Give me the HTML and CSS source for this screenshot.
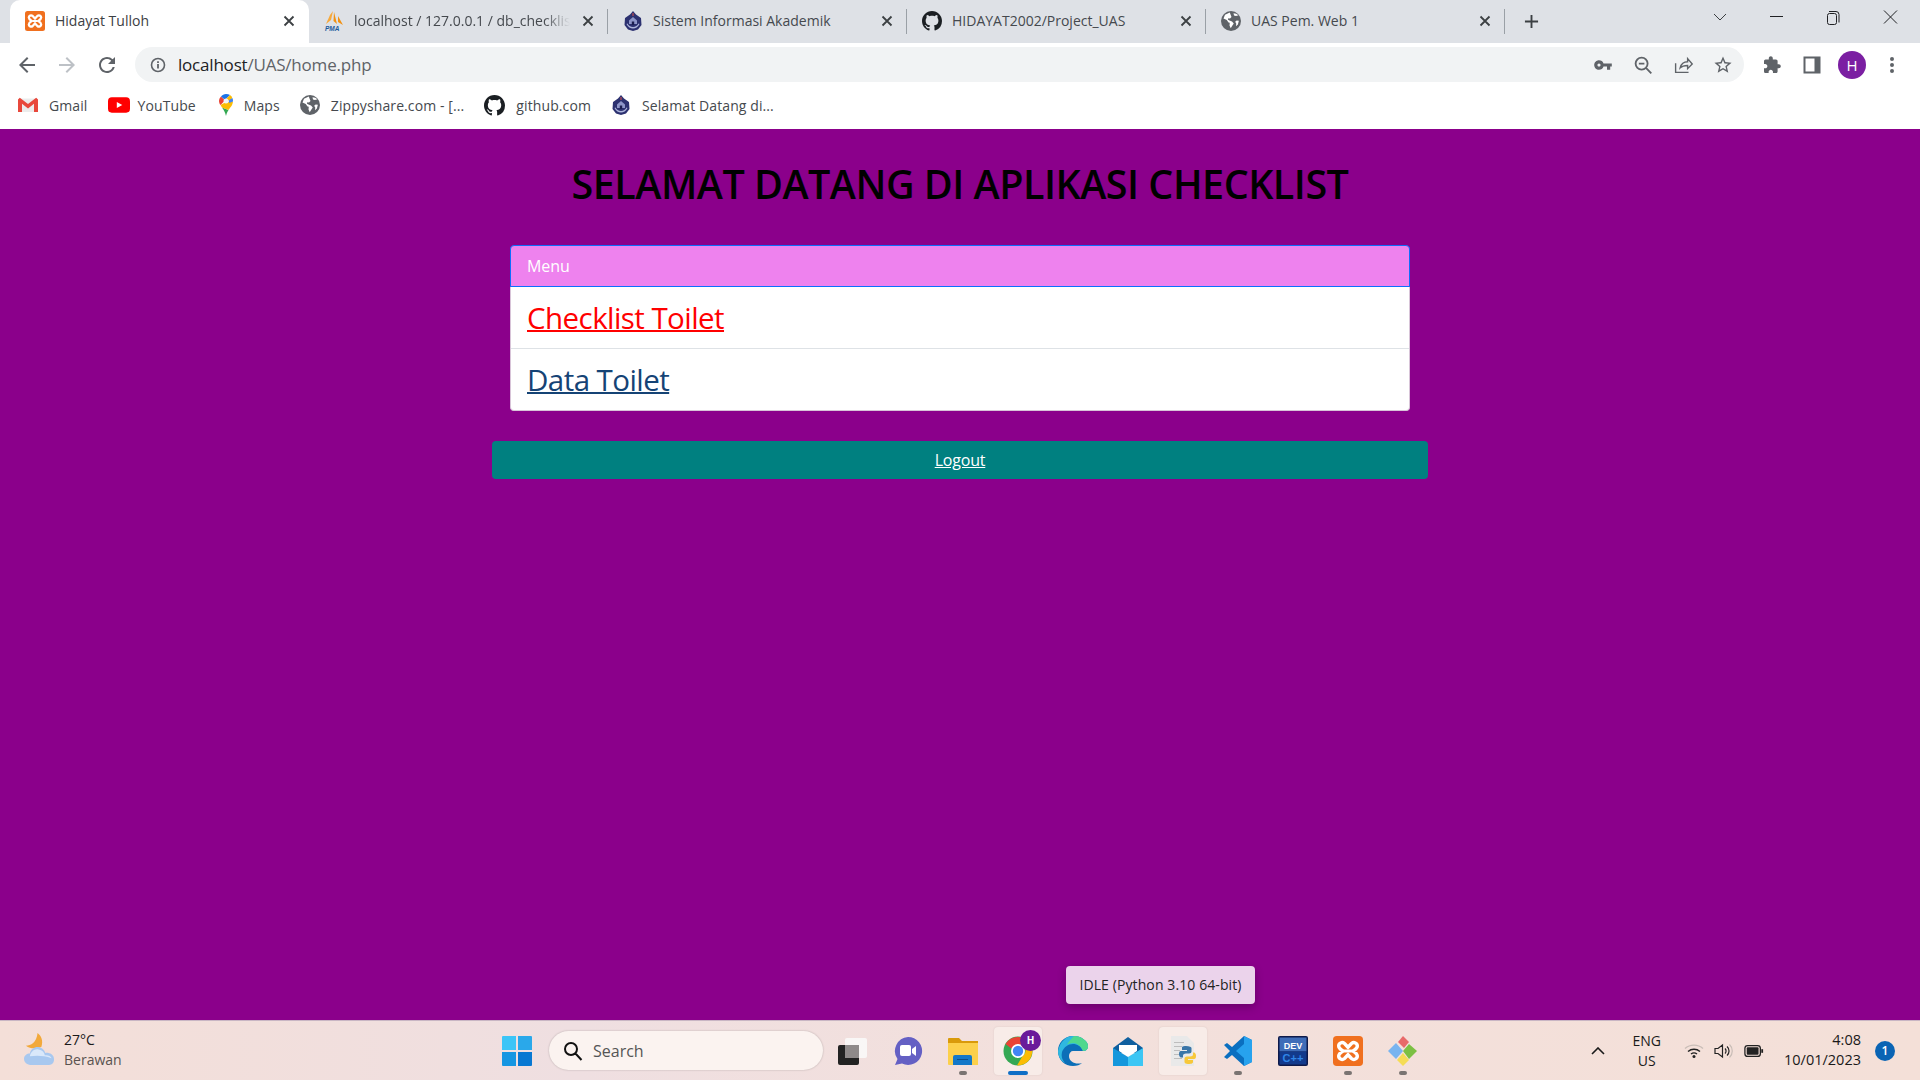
FILE: index.html
```html
<!DOCTYPE html>
<html lang="id">
<head>
<meta charset="utf-8">
<title>Hidayat Tulloh</title>
<link rel="stylesheet" href="styles.css">
</head>
<body>
<svg class="sprite" aria-hidden="true">
  <symbol id="github" viewBox="0 0 16 16"><path fill="#1b1f23" d="M8 0C3.58 0 0 3.58 0 8c0 3.54 2.29 6.53 5.47 7.59.4.07.55-.17.55-.38 0-.19-.01-.82-.01-1.49-2.01.37-2.53-.49-2.69-.94-.09-.23-.48-.94-.82-1.13-.28-.15-.68-.52-.01-.53.63-.01 1.08.58 1.23.82.72 1.21 1.87.87 2.33.66.07-.52.28-.87.51-1.07-1.78-.2-3.64-.89-3.64-3.95 0-.87.31-1.59.82-2.15-.08-.2-.36-1.02.08-2.12 0 0 .67-.21 2.2.82.64-.18 1.32-.27 2-.27.68 0 1.36.09 2 .27 1.53-1.04 2.2-.82 2.2-.82.44 1.1.16 1.92.08 2.12.51.56.82 1.27.82 2.15 0 3.07-1.87 3.75-3.65 3.95.29.25.54.73.54 1.48 0 1.07-.01 1.93-.01 2.2 0 .21.15.46.55.38A8.013 8.013 0 0016 8c0-4.42-3.58-8-8-8z"/></symbol>
  <symbol id="globe" viewBox="0 0 16 16"><circle cx="8" cy="8" r="8" fill="#5f6368"/><path fill="#fff" d="M7 1.200 3.200 3 2 6l2.600 1.200 1.400 2 1 .2-.2 2.200 1 2.200L9 11.800l1.200-1.800-1.400-1.600-2-.8-1.200-.6.2-1.200 1.400.2 1.200-1.200zM10 1.800l.4 1.700 1.600.5 2-.6A7 7 0 0 0 10 1.800zM12.500 7.500l-1.200 1 .9 1.500-.2 2.200 1.500-1.500.8-3z"/></symbol>
  <symbol id="akad" viewBox="0 0 20 20"><path fill="#2c3170" d="M10 0 13 3.500 18 7 18.500 14 15 18.500 10 20 5 18.500 1.500 14 2 7 7 3.500z"/><path fill="#aeb6dc" d="M3.500 13c1.500 3 4 4.500 6.500 4.500s5-1.500 6.500-4.500l-1-.5c-1 2-3 3.500-5.500 3.500s-4.500-1.500-5.500-3.500z"/><path fill="#8d95c8" d="M6 9.500 10 6l4 3.500V13H6z"/><path fill="#1b1e4f" d="M8.800 10.500h2.400V14H8.800z"/><path fill="#d8504a" d="M9.500 2h1v3h-1z"/></symbol>
  <symbol id="xampp" viewBox="0 0 20 20"><rect width="20" height="20" rx="2.500" fill="#f0701f"/><path fill="none" stroke="#fff" stroke-width="2.300" d="M10 7.500 7.700 5C6 3.700 3.800 4.800 3.800 6.600c0 1.500 1.300 2.400 2.900 3.400-1.600 1-2.900 1.900-2.900 3.400 0 1.800 2.200 2.900 3.900 1.600L10 12.500l2.300 2.500c1.700 1.300 3.900.2 3.900-1.600 0-1.500-1.300-2.400-2.900-3.400 1.600-1 2.900-1.900 2.900-3.400 0-1.800-2.200-2.900-3.900-1.600z"/><path stroke="#fff" stroke-width="2" d="M7.500 10h5"/></symbol>
  <symbol id="close" viewBox="0 0 12 12"><path fill="none" stroke="#3c4043" stroke-width="1.800" d="M1.500 1.500 10.500 10.500M10.500 1.500 1.500 10.500"/></symbol>
</svg>

<header class="chrome">
  <div class="tabstrip">
    <div class="tab active">
      <svg class="favicon"><use href="#xampp"/></svg><span class="tab-title">Hidayat Tulloh</span>
      <svg class="tab-x"><use href="#close"/></svg>
    </div>
    <div class="tab">
      <svg class="favicon" viewBox="0 0 20 20"><path fill="#f7a93c" d="M9 0 7 9 2 13 6 4z"/><path fill="#f29111" d="M10 1l3 12-3.500-3zM14 5l5 9-5-3z"/><text x="1" y="19.500" class="pma">PMA</text></svg><span class="tab-title fade">localhost / 127.0.0.1 / db_checklis</span>
      <svg class="tab-x"><use href="#close"/></svg><i class="sep"></i>
    </div>
    <div class="tab">
      <svg class="favicon"><use href="#akad"/></svg><span class="tab-title">Sistem Informasi Akademik</span>
      <svg class="tab-x"><use href="#close"/></svg><i class="sep"></i>
    </div>
    <div class="tab">
      <svg class="favicon"><use href="#github"/></svg><span class="tab-title">HIDAYAT2002/Project_UAS</span>
      <svg class="tab-x"><use href="#close"/></svg><i class="sep"></i>
    </div>
    <div class="tab">
      <svg class="favicon"><use href="#globe"/></svg><span class="tab-title">UAS Pem. Web 1</span>
      <svg class="tab-x"><use href="#close"/></svg><i class="sep"></i>
    </div>
    <svg class="newtab" viewBox="0 0 16 16"><path fill="none" stroke="#3c4043" stroke-width="2" d="M8 1v14M1 8h14"/></svg>
    <div class="winctl">
      <svg class="ctl" viewBox="0 0 57 24"><path fill="none" stroke="#3c4043" d="M23 8l6 6 6-6"/></svg>
      <svg class="ctl" viewBox="0 0 57 24"><path stroke="#202124" d="M22 10.500h13"/></svg>
      <svg class="ctl" viewBox="0 0 57 24"><path fill="none" stroke="#202124" d="M24 5.500h7a3 3 0 0 1 3 3v8M22.500 9.500a2 2 0 0 1 2-2h5a2 2 0 0 1 2 2v7a2 2 0 0 1-2 2h-5a2 2 0 0 1-2-2z"/></svg>
      <svg class="ctl" viewBox="0 0 57 24"><path fill="none" stroke="#202124" d="M22 4.500l13 13M35 4.500l-13 13"/></svg>
    </div>
  </div>

  <div class="toolbar">
    <svg class="tool" viewBox="0 0 24 24"><path fill="#5f6368" d="M20 11H7.830l5.590-5.590L12 4l-8 8 8 8 1.410-1.410L7.830 13H20z"/></svg>
    <svg class="tool" viewBox="0 0 24 24"><path fill="#bdc1c6" d="M4 11h12.170l-5.590-5.590L12 4l8 8-8 8-1.410-1.410L16.170 13H4z"/></svg>
    <svg class="tool" viewBox="0 0 24 24"><path fill="#5f6368" d="M17.650 6.350A7.958 7.958 0 0012 4c-4.420 0-7.990 3.580-7.990 8s3.570 8 7.990 8c3.730 0 6.840-2.550 7.730-6h-2.080A5.990 5.990 0 0112 18c-3.310 0-6-2.690-6-6s2.690-6 6-6c1.660 0 3.140.69 4.220 1.780L13 11h7V4z"/></svg>
    <div class="omnibox">
      <svg class="info" viewBox="0 0 16 16"><circle cx="8" cy="8" r="6.500" fill="none" stroke="#5f6368" stroke-width="1.600"/><path stroke="#5f6368" stroke-width="1.800" d="M8 7v4.500M8 4.200v1.800"/></svg>
      <span class="url"><b>localhost</b>/UAS/home.php</span>
      <div class="omni-actions">
        <svg class="tool" viewBox="-3 -3 30 30"><path fill="#5f6368" d="M12.650 10A5.990 5.990 0 007 6c-3.310 0-6 2.690-6 6s2.690 6 6 6a5.990 5.990 0 005.650-4H17v4h4v-4h2v-4H12.650zM7 14c-1.100 0-2-.9-2-2s.9-2 2-2 2 .9 2 2-.9 2-2 2z"/></svg>
        <svg class="tool" viewBox="-1 -1 26 26"><path fill="none" stroke="#5f6368" stroke-width="2" d="M10.500 4a6.500 6.500 0 1 1 0 13 6.500 6.500 0 0 1 0-13zM15.200 15.200 21 21M7.500 10.500h6"/></svg>
        <svg class="tool" viewBox="-1 -1 26 26"><path fill="none" stroke="#5f6368" stroke-width="1.500" d="M4 10v10h14M9 15c1-4 4-6.500 8-6.500V5l5 6-5 5v-3.500c-3 0-6 .5-8 2.500z"/></svg>
        <svg class="tool" viewBox="-2 -2 28 28"><path fill="#5f6368" d="M22 9.240l-7.190-.62L12 2 9.190 8.630 2 9.240l5.460 4.730L5.820 21 12 17.270 18.180 21l-1.630-7.030L22 9.240zM12 15.400l-3.760 2.270 1-4.280-3.320-2.880 4.380-.38L12 6.100l1.710 4.040 4.380.38-3.320 2.880 1 4.280L12 15.400z"/></svg>
      </div>
    </div>
    <div class="tool-right">
      <svg class="tool" viewBox="-3 -3 30 30"><path fill="#5f6368" d="M20.500 11H19V7c0-1.100-.9-2-2-2h-4V3.500C13 2.120 11.880 1 10.500 1S8 2.120 8 3.500V5H4c-1.100 0-1.990.9-1.990 2v3.800H3.500c1.490 0 2.700 1.210 2.700 2.700s-1.210 2.700-2.700 2.700H2V20c0 1.100.9 2 2 2h3.800v-1.500c0-1.490 1.210-2.700 2.700-2.700 1.490 0 2.700 1.210 2.700 2.700V22H17c1.100 0 2-.9 2-2v-4h1.500c1.380 0 2.500-1.120 2.500-2.500S21.880 11 20.500 11z"/></svg>
      <svg class="tool" viewBox="0 0 24 24"><path fill="#5f6368" fill-rule="evenodd" d="M3.500 3.500h17v17h-17zM5.500 5.500v13h9v-13z"/></svg>
      <span class="avatar">H</span>
      <svg class="tool" viewBox="0 0 24 24"><path fill="#5f6368" d="M12 4a2 2 0 1 1 0 4 2 2 0 0 1 0-4zM12 10a2 2 0 1 1 0 4 2 2 0 0 1 0-4zM12 16a2 2 0 1 1 0 4 2 2 0 0 1 0-4z"/></svg>
    </div>
  </div>

  <nav class="bookmarks">
    <a class="bm"><svg class="bm-ico" viewBox="0 0 20 16"><path fill="#ececec" d="M1 1.500h18V15H1z"/><path fill="#e8483c" d="M0 2.500 1.800.8 10 7l8.200-6.200L20 2.500V15h-4V6.800L10 11.500 4 6.800V15H0z"/></svg>Gmail</a>
    <a class="bm"><svg class="bm-ico wide" viewBox="0 0 20 14"><rect width="20" height="14" rx="3.500" fill="#f00"/><path fill="#fff" d="M8 4.200 13 7l-5 2.800z"/></svg>YouTube</a>
    <a class="bm"><svg class="bm-ico maps" viewBox="0 0 14 22"><path fill="#34a853" d="M3 13.500c2 3 3.200 5 4 8.500.7-3 1.500-4.300 2.500-6z"/><path fill="#fbbc04" d="M1.500 11c.7 1 1.500 2.500 1.500 2.500l6.500 2.500c1.200-2 4-4 4.500-8.500L7 8z"/><path fill="#4285f4" d="M13.300 4 9.500 5 10 9l4-1.500c.1-1.500 0-2.500-.7-3.500z"/><path fill="#ea4335" d="M2 2.500C.5 4 0 5.500 0 7c0 1.500.6 3 1.500 4l4.500-4.500z"/><path fill="#1a73e8" d="M7 0C5 0 3.200 1 2 2.500L6 6l5-5C9.800.3 8.500 0 7 0z"/><path fill="#fbbc04" d="M11 1 6 6l3.500.5 3.800-2.500C12.800 2.800 12 1.800 11 1z"/><circle cx="7" cy="7" r="2.500" fill="#f0f3f8"/></svg>Maps</a>
    <a class="bm"><svg class="bm-ico"><use href="#globe"/></svg>Zippyshare.com - [...</a>
    <a class="bm"><svg class="bm-ico big"><use href="#github"/></svg>github.com</a>
    <a class="bm"><svg class="bm-ico"><use href="#akad"/></svg>Selamat Datang di...</a>
  </nav>
</header>

<main class="page">
  <h1 class="title">SELAMAT DATANG DI APLIKASI CHECKLIST</h1>
  <section class="card">
    <div class="card-head">Menu</div>
    <div class="card-body">
      <div class="card-item"><a href="#" class="lnk lnk-red">Checklist Toilet</a></div>
      <div class="card-item"><a href="#" class="lnk lnk-blue">Data Toilet</a></div>
    </div>
  </section>
  <a href="#" class="logout">Logout</a>
  <div class="tip">IDLE (Python 3.10 64-bit)</div>
</main>

<footer class="taskbar">
  <div class="weather">
    <svg class="weather-ico" viewBox="0 0 32 36"><path fill="#f2a93b" d="M14 0c4 3 6 8 4 14-4 2-11 3-16-1 5 0 11-3 12-13z"/><path fill="#a8c8ef" d="M8 33C3 33 0 30 0 26.500S3 21 6 21c1-4.500 5-7 9-6.500 3.500.5 6 3 7 6 4-.5 9 1.500 9 6.500s-3.500 6-6 6z"/><path fill="#d9e8fa" d="M6 24c1-5 5-8 9-7 4 .5 6 3 6.500 6 3-.5 6 .5 7 3-8-3-16-3-22.500-2z"/></svg>
    <div class="weather-text"><span>27°C</span><span class="muted">Berawan</span></div>
  </div>
  <div class="task-center">
    <span class="tb-ico"><svg class="win" viewBox="0 0 30 30"><path fill="#3cc5f7" d="M0 1a1 1 0 0 1 1-1h13v14H0z"/><path fill="#2aa8ea" d="M16 0h13a1 1 0 0 1 1 1v13H16z"/><path fill="#1596e2" d="M0 16h14v14H1a1 1 0 0 1-1-1z"/><path fill="#0878d2" d="M16 16h14v13a1 1 0 0 1-1 1H16z"/></svg></span>
    <div class="search"><svg class="search-ico" viewBox="0 0 20 20"><path fill="none" stroke="#111" stroke-width="2" d="M8 2a6 6 0 1 1 0 12A6 6 0 0 1 8 2zM12.500 12.500l6 6.500"/></svg><span>Search</span></div>
    <span class="tb-ico"><svg class="ic" viewBox="0 0 30 30"><rect x="7" y="2" width="22" height="20" rx="2" fill="#fafafa" opacity=".85"/><rect x="0" y="9" width="21" height="20" rx="2" fill="#222"/><rect x="7" y="9" width="14" height="13" fill="#8f8a8a"/></svg></span>
    <span class="tb-ico"><svg class="ic" viewBox="0 0 30 30"><path fill="#6460c4" d="M15 1a14 14 0 1 1-6 26.600L2 29l2.500-6A14 14 0 0 1 15 1z"/><rect x="7" y="9" width="11" height="11" rx="2" fill="#fff"/><path fill="#fff" d="M19 13l4-3v10l-4-3z"/></svg></span>
    <span class="tb-ico dot"><svg class="ic" viewBox="0 0 30 30"><path fill="#d99a0a" d="M0 3a1 1 0 0 1 1-1h10l3 3h16v5H0z"/><path fill="#fcd04b" d="M0 7h30v22H1a1 1 0 0 1-1-1z"/><path fill="#1478c8" d="M5 21a2 2 0 0 1 2-2h15a2 2 0 0 1 2 2v8H5z"/><path fill="#0b4f8c" d="M9 23h11v1H9z"/></svg></span>
    <span class="tb-ico on under"><svg class="ic" viewBox="0 0 30 30"><circle cx="15" cy="15" r="14.500" fill="#34a853"/><path fill="#ea4335" d="M2.500 8A14.500 14.500 0 0 1 28 9H15a6.500 6.500 0 0 0-6 4z"/><path fill="#fbbc04" d="M28 9a14.500 14.500 0 0 1-14 20.500L19.500 20a6.500 6.500 0 0 0 0-11z"/><circle cx="15" cy="15" r="7" fill="#fff"/><circle cx="15" cy="15" r="5.200" fill="#4285f4"/></svg><b class="chrome-badge">H</b></span>
    <span class="tb-ico"><svg class="ic" viewBox="0 0 30 30"><path fill="#0c6fb8" d="M15 0C6 0 0 7 0 15c0 9 7 15 15 15 4 0 7-1 9-3-6 2-13-1-13-7 0-3 2-5 4-5h10c4 0 5-3 5-5C30 5 23 0 15 0z"/><path fill="#2fb8e0" d="M15 0C8 0 2 6 0 15c0 5 3 10 7 12-3-3-4-7-3-11 2-5 6-8 11-8 4 0 8 2 10 7 4 0 5-3 5-5C30 5 23 0 15 0z"/><path fill="#4fd88e" d="M16 0c7 0 14 5 14 10 0 2-1 5-5 5-2-5-6-8-10-8-2 0-4 .5-6 1.500C11 5 14 2 16 0z"/></svg></span>
    <span class="tb-ico"><svg class="ic" viewBox="0 0 30 30"><path fill="#0f5f9f" d="M15 1l15 11v5H0v-5z"/><path fill="#fff" d="M6 9h18v6l-9 6-9-6z"/><path fill="#1497dc" d="M0 12l15 9v9H0z"/><path fill="#3cc6f4" d="M30 12l-15 9v9h15z"/></svg></span>
    <span class="tb-ico on"><svg class="ic" viewBox="0 0 30 30"><path fill="#e9e9e9" d="M3 0h16l7 7v23H3z"/><path fill="#bdbdbd" d="M6 6h10v1H6zM6 10h8v1H6zM6 14h6v1H6zM6 18h6v1H6zM6 22h8v1H6z"/><path fill="#3a76a8" d="M18 10c-4 0-4 1-4 2v2h5v1h-6c-2 0-2 2-2 3.500s1 3 2 3h2v-2c0-1 1-2 3-2h3c1.500 0 2.500-1 2.500-2v-3.500c0-1-2-2-5.500-2z"/><path fill="#f7c83a" d="M20 28c4 0 5-1 5-2v-2h-5v-1h6c2 0 2-2 2-3.500s-1-3-2-3h-1v2c0 1-1 2-3 2h-3c-1.500 0-2.500 1-2.500 2v3.500c0 1 1.500 2 3.500 2z"/></svg></span>
    <span class="tb-ico dot"><svg class="ic" viewBox="0 0 30 30"><path fill="#0a6fc0" d="M21 0l8 4v22l-8 4L9 19l-5 4-3-2 6-6-6-6 3-2 5 4z"/><path fill="#27a2ee" d="M21 0l8 4v22l-8 4zM21 8 13 15l8 7z"/></svg></span>
    <span class="tb-ico"><svg class="ic" viewBox="0 0 30 30"><rect width="30" height="30" rx="2" fill="#0e1a4a"/><rect x="1.500" y="1.500" width="27" height="14" fill="#3f6db8"/><rect x="1.500" y="15.500" width="27" height="13" fill="#123a8c"/><text x="15" y="12.500" class="dev">DEV</text><text x="15" y="26" class="cpp">C++</text></svg></span>
    <span class="tb-ico dot"><svg class="ic"><use href="#xampp"/></svg></span>
    <span class="tb-ico dot"><svg class="ic" viewBox="0 0 30 30"><path fill="#78b4f0" d="M0 15l8-8 7 8-7 8z"/><path fill="#e86a6a" d="M10 6l5-6 6 6-5 6z"/><path fill="#7cc043" d="M21 8l8 7-8 8-6-8z"/><path fill="#f5dc55" d="M9 24l6-7 6 7-6 6z"/></svg></span>
  </div>
  <div class="tray">
    <svg class="caret" viewBox="0 0 14 8"><path fill="none" stroke="#1a1a1a" stroke-width="1.600" d="M1 7l6-6 6 6"/></svg>
    <div class="lang"><span>ENG</span><span>US</span></div>
    <svg class="tray-ico" viewBox="0 0 20 16"><path fill="none" stroke="#c9bdb7" stroke-width="1.400" d="M1 5.500c5-4.500 13-4.500 18 0"/><path fill="none" stroke="#222" stroke-width="1.400" d="M4 8.500c3.500-3 8.500-3 12 0M7 11c2-1.500 4-1.500 6 0"/><circle cx="10" cy="13.500" r="1.500" fill="#222"/></svg>
    <svg class="tray-ico" viewBox="0 0 20 16"><path fill="none" stroke="#222" stroke-width="1.200" d="M1 5.500h3L8.500 2v12L4 10.500H1zM11 5.500a3.500 3.500 0 0 1 0 5M13 3.500a6 6 0 0 1 0 9"/><path fill="none" stroke="#c9bdb7" stroke-width="1.200" d="M15.500 1.500a9 9 0 0 1 0 13"/></svg>
    <svg class="tray-ico" viewBox="0 0 22 14"><rect x="1" y="1" width="17" height="12" rx="3" fill="none" stroke="#222" stroke-width="1.400"/><rect x="3" y="3" width="13" height="8" rx="1" fill="#222"/><rect x="19" y="5" width="2" height="4" fill="#222"/></svg>
    <div class="clock"><span>4:08</span><span>10/01/2023</span></div>
    <span class="notif">1</span>
  </div>
</footer>
</body>
</html>
```
FILE: styles.css
```css
* { box-sizing: border-box; }
html, body { margin: 0; height: 100%; }
body {
  width: 1920px;
  height: 1080px;
  overflow: hidden;
  display: flex;
  flex-direction: column;
  font-family: "Open Sans", "Noto Sans", sans-serif;
  background: #8b008b;
}
.sprite { display: none; }

/* browser chrome */
.chrome { background: #fff; flex: none; }
.tabstrip {
  height: 43px;
  background: #dee1e6;
  display: flex;
  align-items: stretch;
  padding-left: 10px;
}
.tab {
  position: relative;
  width: 299px;
  display: flex;
  align-items: center;
  padding: 0 14px 2px 15px;
  color: #45494e;
  font-size: 14px;
}
.tab.active {
  background: #fff;
  border-radius: 10px 10px 0 0;
  color: #3c4043;
}
.favicon { width: 20px; height: 20px; flex: none; margin-right: 10px; }
.tab-title { flex: 1; overflow: hidden; white-space: nowrap; }
.fade {
  -webkit-mask-image: linear-gradient(90deg, #000 88%, transparent);
  mask-image: linear-gradient(90deg, #000 88%, transparent);
}
.tab-x { width: 12px; height: 12px; flex: none; margin-left: 12px; }
.sep {
  position: absolute;
  right: 0;
  top: 9px;
  height: 25px;
  width: 1px;
  background: #9aa0a6;
}
.pma { font: italic 700 6.500px "Liberation Sans", sans-serif; fill: #1d5a9c; }
.newtab { width: 15px; height: 15px; align-self: center; margin: 0 0 0 19px; }
.winctl { margin-left: auto; display: flex; align-items: center; padding-right: 1px; height: 36px; }
.ctl { width: 57px; height: 24px; }

.toolbar {
  height: 43px;
  display: flex;
  align-items: center;
  padding: 0 8px 0 15px;
  gap: 16px;
}
.tool { width: 24px; height: 24px; flex: none; }
.omnibox {
  width: 1609px;
  height: 35px;
  background: #f1f3f4;
  border-radius: 18px;
  display: flex;
  align-items: center;
  padding: 0 9px 0 15px;
  font-size: 17px;
  flex: none;
}
.info { width: 16px; height: 16px; margin-right: 12px; }
.url { color: #5f6368; letter-spacing: -.2px; }
.url b { color: #202124; font-weight: 400; }
.omni-actions { margin-left: auto; display: flex; gap: 16px; }
.tool-right { display: flex; align-items: center; gap: 16px; }
.avatar {
  width: 28px;
  height: 28px;
  border-radius: 50%;
  background: #7b1fa2;
  color: #fff;
  font-size: 15px;
  display: flex;
  align-items: center;
  justify-content: center;
  margin: 0 -2px;
}

.bookmarks {
  height: 43px;
  display: flex;
  align-items: center;
  padding: 0 0 5px 18px;
  gap: 20px;
  font-size: 14px;
  color: #45494e;
  letter-spacing: .1px;
}
.bm { display: flex; align-items: center; white-space: nowrap; }
.bm-ico { width: 20px; height: 20px; margin-right: 11px; flex: none; }
.bm-ico.wide { width: 22px; height: 16px; margin-right: 8px; }
.bm-ico.maps { width: 14px; height: 22px; margin: 0 11px 0 3px; }
.bm-ico.big { width: 21px; height: 21px; }

/* page */
.page {
  flex: 1;
  position: relative;
  display: flex;
  flex-direction: column;
  align-items: center;
  padding-top: 31px;
}
.title {
  margin: 0 0 37px;
  font-size: 39.500px;
  line-height: 48px;
  font-weight: 600;
  color: #000;
  letter-spacing: -.5px;
}
.card { width: 900px; border-radius: 4px; }
.card-head {
  height: 42px;
  padding: 0 16px;
  display: flex;
  align-items: center;
  background: #ee82ee;
  border: 1px solid #0d6efd;
  border-radius: 4px 4px 0 0;
  color: #fff;
  font-size: 16px;
  letter-spacing: -.1px;
}
.card-body {
  background: #fff;
  border: 1px solid #d8c4d8;
  border-top: 0;
  border-radius: 0 0 4px 4px;
}
.card-item {
  height: 61px;
  padding: 0 16px;
  display: flex;
  align-items: center;
  font-size: 29.500px;
  letter-spacing: -.56px;
}
.card-item + .card-item { border-top: 1px solid #dee2e6; height: 62px; }
.lnk { text-decoration: underline; text-decoration-thickness: 2px; }
.lnk-red { color: #f00; }
.lnk-blue { color: #154375; }
.logout {
  margin-top: 30px;
  width: 936px;
  height: 38px;
  border-radius: 4px;
  background: #008080;
  color: #fff;
  font-size: 16px;
  letter-spacing: -.2px;
  display: flex;
  align-items: center;
  justify-content: center;
  text-decoration: underline;
}
.tip {
  position: absolute;
  left: 1066px;
  bottom: 16px;
  width: 189px;
  height: 38px;
  padding-bottom: 2px;
  border-radius: 4px;
  background: #ebd3eb;
  box-shadow: 0 3px 8px rgba(0, 0, 0, .25);
  color: #222;
  font-size: 14px;
  letter-spacing: .1px;
  display: flex;
  align-items: center;
  justify-content: center;
}

/* taskbar */
.taskbar {
  flex: none;
  height: 60px;
  border-top: 1px solid #c9b6c4;
  background: linear-gradient(90deg, #f4dfd8, #efdfe1 30%, #f3e0dc 55%, #f4e0d8);
  display: flex;
  align-items: center;
  position: relative;
  color: #1a1a1a;
  font-size: 14px;
}
.weather { display: flex; align-items: center; margin-left: 24px; width: 469px; gap: 9px; flex: none; }
.weather-ico { width: 31px; height: 35px; }
.weather-text { display: flex; flex-direction: column; line-height: 20px; padding-bottom: 2px; }
.muted { color: #5a5350; }
.task-center { display: flex; align-items: center; gap: 7px; }
.tb-ico {
  position: relative;
  width: 48px;
  height: 48px;
  flex: none;
  border-radius: 4px;
  display: flex;
  align-items: center;
  justify-content: center;
}
.tb-ico.on { background: #f8ece8; box-shadow: 0 0 2px rgba(0, 0, 0, .1); }
.tb-ico.dot::after, .tb-ico.under::after {
  content: "";
  position: absolute;
  bottom: 0;
  left: 20px;
  width: 8px;
  height: 4px;
  border-radius: 2px;
  background: #7a7472;
}
.tb-ico.under::after { left: 14px; width: 20px; background: #0f6fc6; }
.ic { width: 30px; height: 30px; }
.win { width: 30px; height: 30px; }
.chrome-badge {
  position: absolute;
  right: 1px;
  top: 3px;
  width: 21px;
  height: 21px;
  border-radius: 50%;
  background: #6a1b9a;
  color: #fff;
  font-size: 10px;
  display: flex;
  align-items: center;
  justify-content: center;
}
.dev { font: 700 9px "Liberation Sans", sans-serif; fill: #fff; text-anchor: middle; }
.cpp { font: 700 11px "Liberation Sans", sans-serif; fill: #2f86e8; text-anchor: middle; }
.search {
  width: 274px;
  height: 39px;
  margin: 0 -1px 0 1px;
  border-radius: 20px;
  background: #fbf3f0;
  box-shadow: 0 0 2px rgba(0, 0, 0, .25);
  display: flex;
  align-items: center;
  padding-left: 14px;
  gap: 10px;
  color: #555;
  font-size: 16px;
}
.search-ico { width: 20px; height: 20px; }
.tray { position: absolute; right: 0; top: 0; bottom: 0; display: flex; align-items: center; padding-right: 25px; }
.caret { width: 14px; height: 8px; margin-right: 28px; }
.lang { display: flex; flex-direction: column; align-items: center; line-height: 20px; margin-right: 23px; }
.tray-ico { width: 20px; height: 16px; margin-right: 10px; }
.clock { display: flex; flex-direction: column; align-items: flex-end; font-size: 14.500px; line-height: 20px; margin: 0 14px 2px 10px; }
.notif {
  width: 20px;
  height: 20px;
  border-radius: 50%;
  background: #0a64b4;
  color: #fff;
  font-size: 12px;
  font-weight: 600;
  display: flex;
  align-items: center;
  justify-content: center;
}
```
